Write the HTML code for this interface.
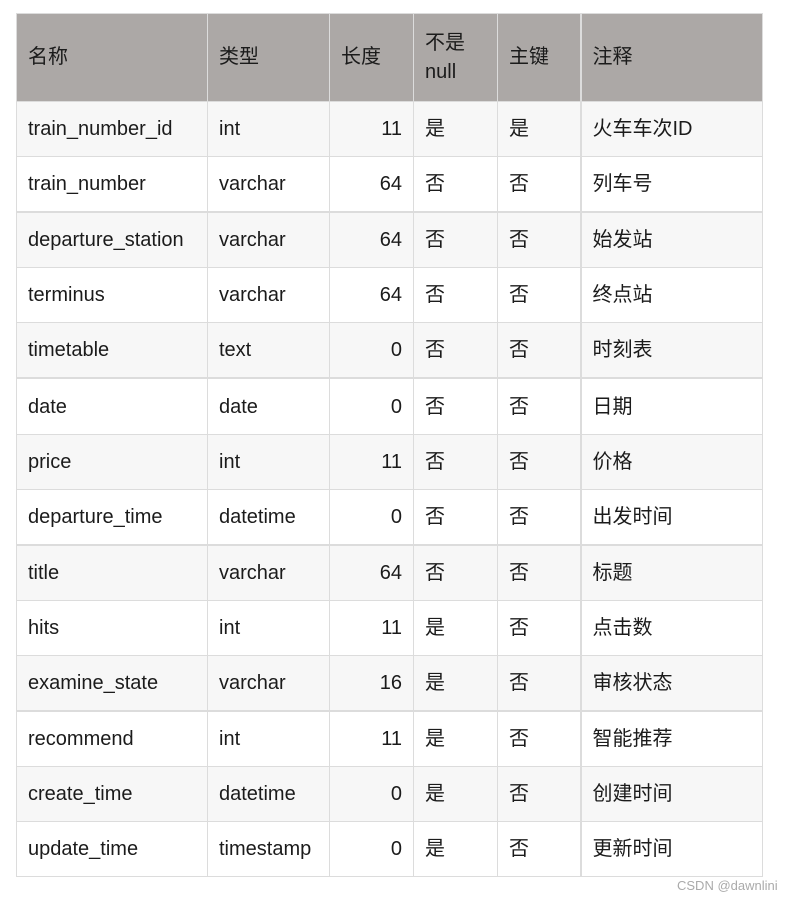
<!DOCTYPE html>
<html><head><meta charset="utf-8"><style>
body{margin:0;background:#fff;width:793px;height:902px;overflow:hidden;position:relative;font-family:"Liberation Sans","Noto Sans CJK SC",sans-serif;}
table{position:absolute;left:16px;top:13px;border-collapse:collapse;table-layout:fixed;width:746px;font-size:20px;color:#1b1b1b;}
td,th{border:1px solid #dcdcdc;padding:0 11px;height:54.1px;line-height:24px;font-weight:normal;text-align:left;white-space:nowrap;vertical-align:middle;}
th{background:#aca8a6;height:87px;line-height:29px;}
tr:nth-child(odd) td{background:#fff}
tr:nth-child(even) td{background:#f7f7f7}
td.r{text-align:right}
tr.t td{border-top:2px solid #dcdcdc}
td.c6,th.c6{border-left:2px solid #dcdcdc}
.wm{position:absolute;left:677px;top:878px;font-size:13px;color:#aaa;}
</style></head><body>
<table>
<colgroup><col style="width:191px"><col style="width:122px"><col style="width:84px"><col style="width:84px"><col style="width:83px"><col style="width:182px"></colgroup>
<tr><th>名称</th><th>类型</th><th>长度</th><th>不是<br>null</th><th>主键</th><th class="c6">注释</th></tr>
<tr><td>train_number_id</td><td>int</td><td class="r">11</td><td>是</td><td>是</td><td class="c6">火车车次ID</td></tr>
<tr><td>train_number</td><td>varchar</td><td class="r">64</td><td>否</td><td>否</td><td class="c6">列车号</td></tr>
<tr class="t"><td>departure_station</td><td>varchar</td><td class="r">64</td><td>否</td><td>否</td><td class="c6">始发站</td></tr>
<tr><td>terminus</td><td>varchar</td><td class="r">64</td><td>否</td><td>否</td><td class="c6">终点站</td></tr>
<tr><td>timetable</td><td>text</td><td class="r">0</td><td>否</td><td>否</td><td class="c6">时刻表</td></tr>
<tr class="t"><td>date</td><td>date</td><td class="r">0</td><td>否</td><td>否</td><td class="c6">日期</td></tr>
<tr><td>price</td><td>int</td><td class="r">11</td><td>否</td><td>否</td><td class="c6">价格</td></tr>
<tr><td>departure_time</td><td>datetime</td><td class="r">0</td><td>否</td><td>否</td><td class="c6">出发时间</td></tr>
<tr class="t"><td>title</td><td>varchar</td><td class="r">64</td><td>否</td><td>否</td><td class="c6">标题</td></tr>
<tr><td>hits</td><td>int</td><td class="r">11</td><td>是</td><td>否</td><td class="c6">点击数</td></tr>
<tr><td>examine_state</td><td>varchar</td><td class="r">16</td><td>是</td><td>否</td><td class="c6">审核状态</td></tr>
<tr class="t"><td>recommend</td><td>int</td><td class="r">11</td><td>是</td><td>否</td><td class="c6">智能推荐</td></tr>
<tr><td>create_time</td><td>datetime</td><td class="r">0</td><td>是</td><td>否</td><td class="c6">创建时间</td></tr>
<tr><td>update_time</td><td>timestamp</td><td class="r">0</td><td>是</td><td>否</td><td class="c6">更新时间</td></tr>
</table>
<div class="wm">CSDN @dawnlini</div>
</body></html>
